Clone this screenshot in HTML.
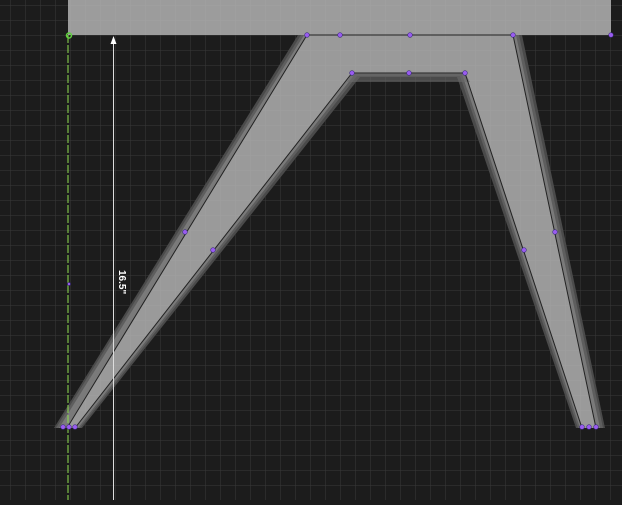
<!DOCTYPE html><html><head><style>html,body{margin:0;padding:0;background:#1c1c1c;overflow:hidden}</style></head><body>
<svg width="622" height="500" xmlns="http://www.w3.org/2000/svg">
<defs>
<pattern id="g" x="10" y="5" width="15" height="15" patternUnits="userSpaceOnUse"><path d="M0 0H15M0 0V15" stroke="#3a3a3a" stroke-width="1" fill="none"/></pattern>
<pattern id="g2" x="10" y="5" width="15" height="15" patternUnits="userSpaceOnUse"><path d="M0 0H15M0 0V15" stroke="#aaaaaa" stroke-width="1" fill="none"/></pattern>
</defs>
<rect width="622" height="500" fill="#1c1c1c"/>
<rect width="622" height="500" fill="url(#g)"/>
<polygon points="298,35 522,35 605,428 576,428 457,77 360,77 82,428 54,428" fill="#4a4a4a"/>
<polygon points="301,35 519,35 603,428 578,428 460,76 357,76 80,428 56,428" fill="#5e5e5e"/>
<polygon points="304,35 516,35 600,428 580,428 462,74 355,74 78,428 59,428" fill="#7a7a7a"/>
<polygon points="307,35 513,35 596,428 582,428 465,73 352,73 75,428 67,428" fill="#9a9a9a"/>
<polygon points="307,35 513,35 596,428 582,428 465,73 352,73 75,428 67,428" fill="url(#g2)" opacity="0.4"/>
<rect x="68" y="0" width="543" height="35" fill="#9c9c9c"/>
<rect x="68" y="0" width="543" height="35" fill="url(#g2)" opacity="0.4"/>
<polygon points="352,73 465,73 470,82 347,82" fill="#6a6a6a" opacity="0.6"/>
<g stroke="#222" stroke-width="1" fill="none">
<path d="M307 35H513M307 35L67 428M513 35L596 428M352 73H465M352 73L75 428M465 73L582 428"/>
</g>
<line x1="68" y1="35" x2="68" y2="500" stroke="#8fe04f" stroke-width="1" stroke-dasharray="8,2"/>
<circle cx="69" cy="35.5" r="2.5" fill="none" stroke="#5fd03f" stroke-width="1.5"/>
<line x1="113.5" y1="42" x2="113.5" y2="500" stroke="#dddddd" stroke-width="1"/>
<polygon points="113.5,36 110.5,44 116.5,44" fill="#fff"/>
<text x="0" y="0" transform="translate(119,270) rotate(90)" fill="#fff" font-family="Liberation Sans, sans-serif" font-size="10" font-weight="bold">16.5"</text>
<g fill="#9a5cf0" stroke="#3a2a80" stroke-width="0.6">
<circle cx="307" cy="35" r="2.3"/><circle cx="340" cy="35" r="2.3"/><circle cx="410" cy="35" r="2.3"/><circle cx="513" cy="35" r="2.3"/><circle cx="611" cy="35" r="2.3"/>
<circle cx="352" cy="73" r="2.3"/><circle cx="409" cy="73" r="2.3"/><circle cx="465" cy="73" r="2.3"/>
<circle cx="185" cy="232" r="2.3"/><circle cx="213" cy="250" r="2.3"/><circle cx="524" cy="250" r="2.3"/><circle cx="555" cy="232" r="2.3"/>
<circle cx="69" cy="284" r="1.5"/>
<circle cx="63" cy="427" r="2.3"/><circle cx="69" cy="427" r="2.3"/><circle cx="75" cy="427" r="2.3"/>
<circle cx="582" cy="427" r="2.3"/><circle cx="589" cy="427" r="2.3"/><circle cx="596" cy="427" r="2.3"/>
</g>
</svg>
</body></html>
